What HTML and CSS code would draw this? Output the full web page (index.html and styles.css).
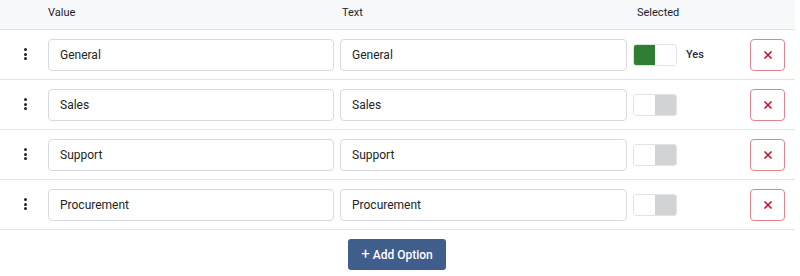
FILE: index.html
```html
<!DOCTYPE html>
<html>
<head>
<meta charset="utf-8">
<link rel="stylesheet" href="styles.css">
</head>
<body>
<div class="table">
  <div class="row head">
    <div></div>
    <div class="hcell">Value</div>
    <div class="hcell h-text">Text</div>
    <div class="hcell h-sel">Selected</div>
    <div></div>
  </div>
  <div class="row">
    <div class="handle"><span></span><span></span><span></span></div>
    <input class="field" value="General">
    <input class="field" value="General">
    <div class="sel"><span class="toggle on"><span class="half a"></span><span class="half b"></span></span><span class="yes">Yes</span></div>
    <button class="del"><svg width="10" height="10" viewBox="0 0 10 10"><path d="M1.5 1.5 L8.5 8.5 M8.5 1.5 L1.5 8.5" stroke="#c8102e" stroke-width="1.6" fill="none"/></svg></button>
  </div>
  <div class="row">
    <div class="handle"><span></span><span></span><span></span></div>
    <input class="field" value="Sales">
    <input class="field" value="Sales">
    <div class="sel"><span class="toggle off"><span class="half a"></span><span class="half b"></span></span></div>
    <button class="del"><svg width="10" height="10" viewBox="0 0 10 10"><path d="M1.5 1.5 L8.5 8.5 M8.5 1.5 L1.5 8.5" stroke="#c8102e" stroke-width="1.6" fill="none"/></svg></button>
  </div>
  <div class="row">
    <div class="handle"><span></span><span></span><span></span></div>
    <input class="field" value="Support">
    <input class="field" value="Support">
    <div class="sel"><span class="toggle off"><span class="half a"></span><span class="half b"></span></span></div>
    <button class="del"><svg width="10" height="10" viewBox="0 0 10 10"><path d="M1.5 1.5 L8.5 8.5 M8.5 1.5 L1.5 8.5" stroke="#c8102e" stroke-width="1.6" fill="none"/></svg></button>
  </div>
  <div class="row">
    <div class="handle"><span></span><span></span><span></span></div>
    <input class="field" value="Procurement">
    <input class="field" value="Procurement">
    <div class="sel"><span class="toggle off"><span class="half a"></span><span class="half b"></span></span></div>
    <button class="del"><svg width="10" height="10" viewBox="0 0 10 10"><path d="M1.5 1.5 L8.5 8.5 M8.5 1.5 L1.5 8.5" stroke="#c8102e" stroke-width="1.6" fill="none"/></svg></button>
  </div>
  <div class="actions">
    <button class="add"><span class="plus">+</span> Add Option</button>
  </div>
</div>
</body>
</html>
```

FILE: styles.css
```css
* { box-sizing: border-box; }
html, body { margin: 0; padding: 0; background: #fff; }
body { font-family: Roboto, "Liberation Sans", Arial, sans-serif; color: #212529; }
.table { width: 795px; }
.row {
  display: grid;
  grid-template-columns: 42px 286px 287px 111px 35px;
  column-gap: 6px;
  padding-right: 10px;
  align-items: center;
  height: 50px;
  border-bottom: 1px solid #e1e4e8;
}
.row.head {
  height: 30px;
  background: #f7f8fa;
  border-bottom: 1px solid #e1e4e8;
}
.hcell { font-size: 11px; font-weight: 400; color: #1e1e1e; padding-bottom: 5px; }
.h-text { padding-left: 2px; }
.h-sel { padding-left: 4px; }
.handle {
  display: flex;
  flex-direction: column;
  align-items: center;
  gap: 1.5px;
  padding-left: 9px;
  padding-bottom: 1px;
}
.handle span { width: 3px; height: 3px; border-radius: 50%; background: #222; }
.field {
  height: 32px;
  width: 100%;
  border: 1px solid #d6dae0;
  border-radius: 4px;
  padding: 0 11px;
  font-family: inherit;
  font-size: 12px;
  color: #212529;
  background: #fff;
  outline: none;
}
.sel { display: flex; align-items: center; gap: 9px; }
.toggle {
  display: flex;
  width: 44px;
  height: 22px;
  border: 1px solid #e0e2e5;
  border-radius: 3px;
  overflow: hidden;
}
.half { flex: 1; }
.toggle.on .a { background: #2e7d32; }
.toggle.on .b { background: #fff; }
.toggle.off .a { background: #fff; }
.toggle.off .b { background: #d2d3d5; }
.yes { font-size: 11px; font-weight: 500; color: #1f2d44; }
.del {
  width: 35px;
  height: 32px;
  border: 1px solid #e0868b;
  border-radius: 4px;
  background: #fff;
  display: flex;
  align-items: center;
  justify-content: center;
  padding: 0;
}
.actions { display: flex; justify-content: center; padding-top: 9px; padding-right: 1px; }
.add {
  height: 31px;
  width: 98px;
  background: #3f5e8c;
  color: #fff;
  border: none;
  border-radius: 3px;
  font-family: inherit;
  font-size: 12px;
  font-weight: 500;
  padding: 0;
}
.plus { font-size: 15px; font-weight: 400; line-height: 1; }
```
